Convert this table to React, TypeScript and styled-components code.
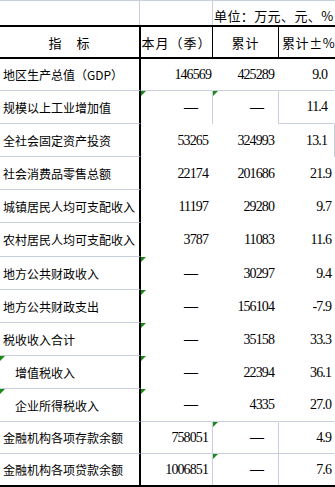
import React from 'react';
import styled, { createGlobalStyle, css } from 'styled-components';

const GRID = '#c8cedb';
const INK = '#000000';
const FLAG = '#1b8a1b';

const GlobalStyle = createGlobalStyle`
  html, body {
    margin: 0;
    padding: 0;
    background: #ffffff;
    overflow: hidden;
  }
  body {
    width: 335px;
    height: 487px;
  }
  * { box-sizing: border-box; }
`;

const Sheet = styled.div`
  width: 335px;
  display: flex;
  flex-direction: column;
  background: #ffffff;
  color: ${INK};
  font-family: "Noto Sans CJK SC", "Noto Sans", sans-serif;
`;

const TopRow = styled.div`
  display: grid;
  grid-template-columns: 140px 73px 122px;
  height: 25px;
  border-top: 1px solid ${GRID};
`;

const TopCell = styled.div<{ $line?: boolean }>`
  border-right: ${(p) => (p.$line ? `1px solid ${GRID}` : 'none')};
`;

const UnitCell = styled.div`
  display: flex;
  align-items: flex-end;
  padding: 0 0 1px 1px;
  font-size: 13px;
  letter-spacing: 0.4px;
  line-height: 16px;
  white-space: nowrap;
`;

const HeaderRow = styled.div`
  display: grid;
  grid-template-columns: 141px 72px 66px 56px;
  height: 34px;
  border-top: 2px solid ${INK};
  border-bottom: 2px solid ${INK};
`;

const HeadCell = styled.div<{ $rule?: 'thick' | 'thin' | 'none'; $align?: 'center' | 'left' }>`
  display: flex;
  align-items: center;
  justify-content: ${(p) => (p.$align === 'left' ? 'flex-start' : 'center')};
  padding-left: ${(p) => (p.$align === 'left' ? '3px' : '0')};
  font-size: 13px;
  letter-spacing: ${(p) => (p.$align === 'left' ? '0.6px' : '1px')};
  white-space: nowrap;
  overflow: hidden;
  border-right: ${(p) =>
    p.$rule === 'thick' ? `2px solid ${INK}` : p.$rule === 'thin' ? `1px solid ${INK}` : 'none'};
`;

const Row = styled.div<{ $h: number; $last?: boolean }>`
  display: grid;
  grid-template-columns: 141px 72px 66px 56px;
  height: ${(p) => p.$h}px;
  ${(p) =>
    p.$last &&
    css`
      border-bottom: 2px solid ${INK};
    `}
`;

const Flag = styled.span`
  position: absolute;
  top: 0;
  left: 0;
  width: 0;
  height: 0;
  border-top: 5px solid ${FLAG};
  border-right: 5px solid transparent;
`;

const LabelCell = styled.div<{ $indent?: number; $bottom?: boolean }>`
  position: relative;
  display: flex;
  align-items: center;
  padding-left: ${(p) => p.$indent ?? 3}px;
  font-size: 12px;
  white-space: nowrap;
  border-right: 2px solid ${INK};
  border-bottom: ${(p) => (p.$bottom ? `1px solid ${GRID}` : 'none')};
`;

const ValueCell = styled.div<{ $pad: number; $right?: boolean; $bottom?: boolean; $dash?: boolean }>`
  position: relative;
  display: flex;
  align-items: center;
  justify-content: flex-end;
  padding-right: ${(p) => p.$pad}px;
  font-family: "Liberation Serif", "Times New Roman", serif;
  font-size: 14px;
  font-weight: ${(p) => (p.$dash ? 700 : 400)};
  letter-spacing: -0.9px;
  white-space: nowrap;
  border-right: 1px solid ${(p) => (p.$right ? GRID : 'transparent')};
  border-bottom: ${(p) => (p.$bottom ? `1px solid ${GRID}` : 'none')};
`;

interface CellData {
  v: string;
  pad?: number;
  right?: boolean;
  bottom?: boolean;
  flag?: boolean;
}

interface RowData {
  label: string;
  h: number;
  indent?: number;
  labelFlag?: boolean;
  cells: [CellData, CellData, CellData];
}

const DASH = '—';

const rows: RowData[] = [
  {
    label: '地区生产总值（GDP）',
    h: 32,
    cells: [
      { v: '146569', pad: 1, bottom: true },
      { v: '425289', bottom: true },
      { v: '9.0', pad: 7, bottom: true },
    ],
  },
  {
    label: '规模以上工业增加值',
    h: 33,
    cells: [
      { v: DASH, right: true, flag: true },
      { v: DASH, right: true, flag: true },
      { v: '11.4', pad: 7, bottom: true },
    ],
  },
  {
    label: '全社会固定资产投资',
    h: 33,
    cells: [{ v: '53265' }, { v: '324993' }, { v: '13.1', pad: 7, right: true }],
  },
  { label: '社会消费品零售总额', h: 33, cells: [{ v: '22174' }, { v: '201686' }, { v: '21.9' }] },
  { label: '城镇居民人均可支配收入', h: 33, cells: [{ v: '11197' }, { v: '29280' }, { v: '9.7' }] },
  { label: '农村居民人均可支配收入', h: 34, cells: [{ v: '3787' }, { v: '11083' }, { v: '11.6' }] },
  { label: '地方公共财政收入', h: 33, cells: [{ v: DASH, flag: true }, { v: '30297' }, { v: '9.4' }] },
  { label: '地方公共财政支出', h: 33, cells: [{ v: DASH, flag: true }, { v: '156104' }, { v: '-7.9' }] },
  { label: '税收收入合计', h: 33, cells: [{ v: DASH, flag: true }, { v: '35158' }, { v: '33.3' }] },
  {
    label: '增值税收入',
    h: 33,
    indent: 15,
    labelFlag: true,
    cells: [{ v: DASH, flag: true }, { v: '22394' }, { v: '36.1' }],
  },
  {
    label: '企业所得税收入',
    h: 33,
    indent: 15,
    labelFlag: true,
    cells: [
      { v: DASH, flag: true, bottom: true },
      { v: '4335', bottom: true },
      { v: '27.0', bottom: true },
    ],
  },
  {
    label: '金融机构各项存款余额',
    h: 32,
    cells: [
      { v: '758051', right: true, bottom: true },
      { v: DASH, right: true, bottom: true, flag: true },
      { v: '4.9', bottom: true },
    ],
  },
  {
    label: '金融机构各项贷款余额',
    h: 33,
    cells: [
      { v: '1006851', right: true },
      { v: DASH, right: true, flag: true },
      { v: '7.6' },
    ],
  },
];

const defaultPad = (col: number, v: string) => {
  if (v === DASH) return 15;
  return col === 2 ? 3 : 4;
};

export default function App() {
  return (
    <>
      <GlobalStyle />
      <Sheet>
        <TopRow>
          <TopCell $line />
          <TopCell $line />
          <UnitCell>单位：万元、元、%</UnitCell>
        </TopRow>
        <HeaderRow>
          <HeadCell $rule="thick">指　标</HeadCell>
          <HeadCell $rule="thin">本月（季）</HeadCell>
          <HeadCell $rule="thin">累计</HeadCell>
          <HeadCell $rule="none" $align="left">
            累计±%
          </HeadCell>
        </HeaderRow>
        {rows.map((r, i) => {
          const last = i === rows.length - 1;
          return (
            <Row key={r.label} $h={r.h} $last={last}>
              <LabelCell $indent={r.indent} $bottom={!last}>
                {r.labelFlag && <Flag />}
                {r.label}
              </LabelCell>
              {r.cells.map((c, j) => (
                <ValueCell
                  key={j}
                  $pad={c.pad ?? defaultPad(j, c.v)}
                  $right={c.right}
                  $bottom={c.bottom}
                  $dash={c.v === DASH}
                >
                  {c.flag && <Flag />}
                  {c.v}
                </ValueCell>
              ))}
            </Row>
          );
        })}
      </Sheet>
    </>
  );
}
